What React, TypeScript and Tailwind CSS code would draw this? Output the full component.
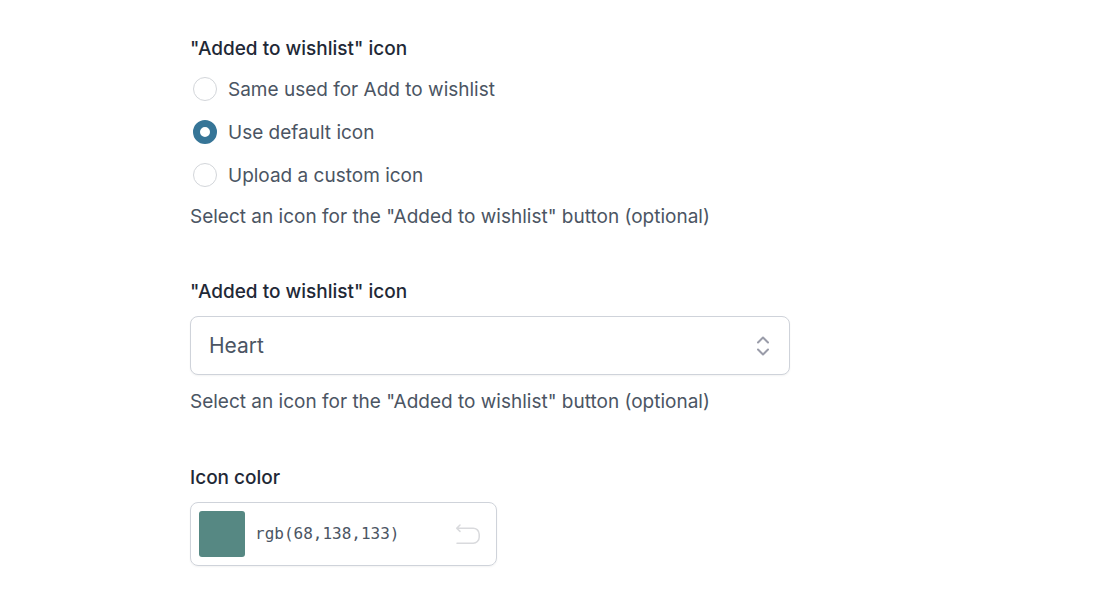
import { useState } from "react";

const iconSources = [
  { value: "same", label: "Same used for Add to wishlist" },
  { value: "default", label: "Use default icon" },
  { value: "custom", label: "Upload a custom icon" },
];

const defaultColor = "rgb(68,138,133)";

export default function App() {
  const [source, setSource] = useState("default");
  const [icon, setIcon] = useState("heart");
  const [color, setColor] = useState(defaultColor);

  return (
    <form className="ml-[190px] mr-8 max-w-[600px] pt-9 pb-8 font-['Inter',sans-serif] text-[19px] leading-[26px] text-[#4b5563]">
      {/* Icon source */}
      <fieldset>
        <legend className="font-medium text-[#1f2937]">"Added to wishlist" icon</legend>
        <div className="mt-[15px] flex flex-col gap-[17px]">
          {iconSources.map((item) => (
            <label key={item.value} className="flex items-start gap-[11px] pl-[3px]">
              <input
                type="radio"
                name="icon-source"
                value={item.value}
                checked={source === item.value}
                onChange={() => setSource(item.value)}
                className="size-6 shrink-0 appearance-none rounded-full border border-[#d3d6da] bg-white checked:border-[7px] checked:border-[#367597]"
              />
              {item.label}
            </label>
          ))}
        </div>
        <p className="mt-[15px]">Select an icon for the "Added to wishlist" button (optional)</p>
      </fieldset>

      {/* Default icon */}
      <div className="mt-[49px]">
        <label htmlFor="icon" className="block font-medium text-[#1f2937]">
          "Added to wishlist" icon
        </label>
        <div className="mt-[11px] grid items-center">
          <select
            id="icon"
            value={icon}
            onChange={(e) => setIcon(e.target.value)}
            className="col-start-1 row-start-1 h-[59px] w-full appearance-none rounded-lg border border-[#cfd3da] bg-white px-[18px] text-[21px] shadow-xs"
          >
            <option value="heart">Heart</option>
            <option value="star">Star</option>
          </select>
          <svg
            viewBox="0 0 14 20"
            className="pointer-events-none col-start-1 row-start-1 mr-5 h-5 w-[14px] justify-self-end text-[#9a9ca9]"
            fill="none"
            stroke="currentColor"
            strokeWidth="2"
            strokeLinecap="round"
            strokeLinejoin="round"
            aria-hidden="true"
          >
            <path d="M2 6.5 7 1.5l5 5M2 13.5l5 5 5-5" />
          </svg>
        </div>
        <p className="mt-[14px]">Select an icon for the "Added to wishlist" button (optional)</p>
      </div>

      {/* Icon color */}
      <div className="mt-[50px]">
        <label htmlFor="color" className="block font-medium text-[#1f2937]">
          Icon color
        </label>
        <div className="mt-[11px] flex h-16 max-w-[307px] items-center rounded-lg border border-[#cfd3da] pr-[15px] pl-2 shadow-xs">
          <span className="size-[46px] shrink-0 rounded-[3px] bg-[#568883]" />
          <input
            id="color"
            type="text"
            value={color}
            onChange={(e) => setColor(e.target.value)}
            className="ml-[10px] min-w-0 flex-1 bg-transparent font-['DejaVu_Sans_Mono',monospace] text-[16px]"
          />
          <button type="button" aria-label="Reset color" onClick={() => setColor(defaultColor)} className="text-[#d9dadd]">
            <svg
              viewBox="0 0 26 22"
              className="h-[22px] w-[26px]"
              fill="none"
              stroke="currentColor"
              strokeWidth="1.5"
              strokeLinecap="round"
              strokeLinejoin="round"
              aria-hidden="true"
            >
              <path d="M5 2 1.7 5.2 5 8.4M1.7 5.2H18a6 6 0 0 1 6.2 6v3a6 6 0 0 1-6.2 6H2" />
            </svg>
          </button>
        </div>
      </div>
    </form>
  );
}
